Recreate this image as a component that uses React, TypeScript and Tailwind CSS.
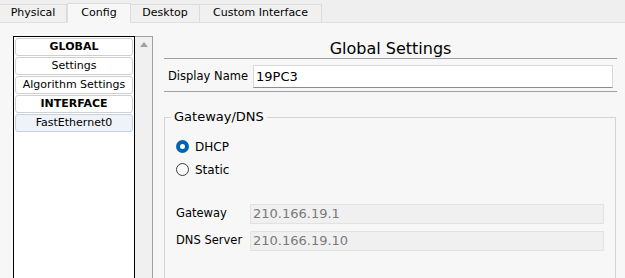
import React from "react";

interface NavItem {
  label: string;
  bold?: boolean;
  selected?: boolean;
}

const tabs = [
  { label: "Physical", width: "w-[67px]", active: false },
  { label: "Config", width: "w-[64px]", active: true },
  { label: "Desktop", width: "w-[69px]", active: false },
  { label: "Custom Interface", width: "w-[122px]", active: false },
];

const navItems: NavItem[] = [
  { label: "GLOBAL", bold: true },
  { label: "Settings" },
  { label: "Algorithm Settings" },
  { label: "INTERFACE", bold: true },
  { label: "FastEthernet0", selected: true },
];

const Radio = ({ checked, label }: { checked: boolean; label: string }) => (
  <div className="flex h-[23px] items-center gap-[6px]">
    {checked ? (
      <span className="flex h-[13px] w-[13px] items-center justify-center rounded-full bg-[#0063b1]">
        <span className="h-[5px] w-[5px] rounded-full bg-white" />
      </span>
    ) : (
      <span className="h-[13px] w-[13px] rounded-full border border-[#3c3c3c] bg-[#fafafa]" />
    )}
    <span className="text-[12px] leading-[16px]">{label}</span>
  </div>
);

const ReadOnlyField = ({ label, value }: { label: string; value: string }) => (
  <div className="flex h-[20px] items-center">
    <span className="w-[74px] text-[11.5px]">{label}</span>
    <div className="flex h-[20px] flex-1 items-center border border-[#e2e2e2] bg-[#f0f0f0] pl-[2px] text-[13px] text-[#7a7a7a]">
      {value}
    </div>
  </div>
);

export default function App() {
  return (
    <div className="h-[278px] w-[625px] overflow-hidden bg-[#f7f7f7] font-['DejaVu_Sans',sans-serif] text-black">
      {/* Tabs */}
      <div className="flex h-[23px] items-end border-b border-[#e0e0e0] bg-[#efefef]">
        {tabs.map((tab) => (
          <div
            key={tab.label}
            className={`flex items-center justify-center text-[11px] ${tab.width} ${
              tab.active
                ? "-mb-px h-[20px] border-x border-t border-[#dcdcdc] bg-[#f7f7f7]"
                : "h-[18px] border-r border-t border-[#dcdcdc] bg-[#f0f0f0]"
            }`}
          >
            {tab.label}
          </div>
        ))}
      </div>

      <div className="flex">
        {/* Left nav list */}
        <div className="flex pl-[13px] pt-[13px]">
          <div className="flex h-[260px] w-[122px] flex-col gap-[1px] border border-black bg-white px-[1px] pt-[1px]">
            {navItems.map((item) => (
              <div
                key={item.label}
                className={`flex h-[18px] items-center justify-center rounded-[3px] border text-[11px] ${
                  item.bold ? "font-bold" : ""
                } ${item.selected ? "border-[#c8d0dc] bg-[#eef3fa]" : "border-[#cfcfcf] bg-white"}`}
              >
                {item.label}
              </div>
            ))}
          </div>
          <div className="h-[260px] w-[18px] border-r border-t border-[#a0a0a0] bg-[#f0f0f0] pl-[5px] pt-[5px]">
            <svg width="8" height="5" viewBox="0 0 8 5">
              <path d="M4 0 L8 5 L0 5 Z" fill="#a0a0a0" />
            </svg>
          </div>
        </div>

        {/* Settings panel */}
        <div className="ml-[11px] flex w-[453px] flex-col pt-[17px]">
          <div className="border-b border-[#a0a0a0] text-center text-[16px] leading-[18px]">
            Global Settings
          </div>

          <div className="flex items-center border-b border-[#a0a0a0] pb-[3px] pt-[6px]">
            <span className="w-[89px] pl-[4px] text-[11.5px]">Display Name</span>
            <div className="mr-[4px] flex h-[23px] flex-1 items-center border border-[#dadada] border-b-[#8c8c8c] bg-white pl-[2px] text-[13px]">
              19PC3
            </div>
          </div>

          <fieldset className="mr-[1px] mt-[17px] h-[200px] border border-[#d5d5d5] pl-[11px] pr-[11px]">
            <legend className="-ml-[5px] px-[3px] text-[13px] leading-[16px]">Gateway/DNS</legend>
            <div className="mt-[10px]">
              <Radio checked label="DHCP" />
              <Radio checked={false} label="Static" />
            </div>
            <div className="mt-[23px] flex flex-col gap-[7px]">
              <ReadOnlyField label="Gateway" value="210.166.19.1" />
              <ReadOnlyField label="DNS Server" value="210.166.19.10" />
            </div>
          </fieldset>
        </div>
      </div>
    </div>
  );
}
